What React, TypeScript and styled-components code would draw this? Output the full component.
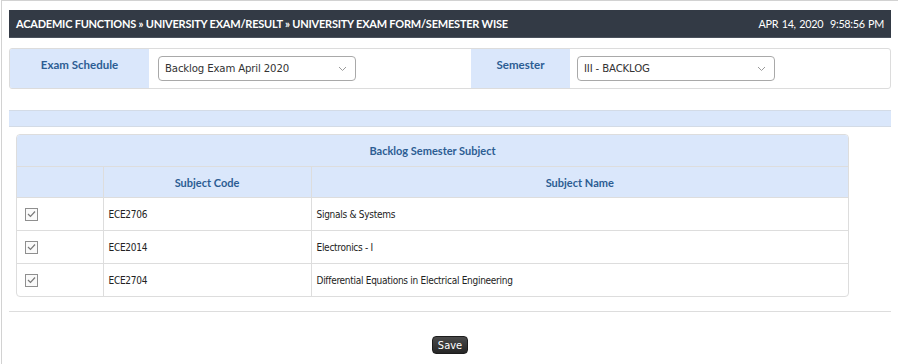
import styled, { createGlobalStyle } from "styled-components";

const GlobalStyle = createGlobalStyle`
  html, body {
    margin: 0;
    padding: 0;
    background: #ffffff;
    overflow: hidden;
  }
  body {
    font-family: "DejaVu Sans Condensed", "DejaVu Sans", sans-serif;
    font-stretch: condensed;
  }
`;

const Frame = styled.div`
  margin-left: 1px;
  border-top: 1px solid #d2d2d2;
  border-left: 1px solid #d2d2d2;
  padding: 9px 7px 10px 7px;
  width: 882px;
  height: 353px;
  box-sizing: content-box;
`;

const TitleBar = styled.div`
  display: flex;
  justify-content: space-between;
  align-items: center;
  height: 28px;
  padding: 0 7px 0 7px;
  background: #333a45;
  border-bottom: 1px solid #4a515c;
  box-sizing: border-box;
  color: #ffffff;
`;

const Crumbs = styled.div`
  font-family: "Lato", "Liberation Sans", sans-serif;
  font-stretch: normal;
  font-weight: 700;
  font-size: 11px;
  letter-spacing: -0.22px;
`;

const Clock = styled.div`
  font-family: "Lato", "Liberation Sans", sans-serif;
  font-stretch: normal;
  font-size: 10.8px;
  letter-spacing: -0.3px;
  word-spacing: 1px;
  white-space: pre;
`;

const FilterBox = styled.div`
  display: grid;
  grid-template-columns: 139px 322px 99px 1fr;
  margin-top: 10px;
  height: 41px;
  border: 1px solid #dcdcdc;
  border-radius: 3px;
  overflow: hidden;
  box-sizing: border-box;
`;

const FilterLabel = styled.div`
  background: #dae7fb;
  color: #2c5d93;
  font-family: "Lato", "Liberation Sans", sans-serif;
  font-stretch: normal;
  font-weight: 700;
  font-size: 11.5px;
  text-align: center;
  padding-top: 9px;
`;

const FilterField = styled.div<{ $pad: number }>`
  display: flex;
  align-items: center;
  padding-left: ${(p) => p.$pad}px;
`;

const SelectBox = styled.div<{ $width: number }>`
  display: flex;
  align-items: center;
  justify-content: space-between;
  width: ${(p) => p.$width}px;
  height: 25px;
  border: 1px solid #a9a9a9;
  border-radius: 4px;
  padding: 0 8px 0 6px;
  box-sizing: border-box;
  color: #333333;
  font-size: 11.3px;
  letter-spacing: -0.15px;
`;

const Chevron = () => (
  <svg width="9" height="6" viewBox="0 0 9 6">
    <path d="M1 1 L4.5 4.5 L8 1" fill="none" stroke="#9a9a9a" strokeWidth="1" />
  </svg>
);

const Strip = styled.div`
  margin-top: 21px;
  height: 17px;
  background: #dae7fb;
  border-top: 1px solid #d3dbe6;
  border-bottom: 1px solid #d3dbe6;
  box-sizing: border-box;
`;

const TableWrap = styled.div`
  margin: 7px 0 0 7px;
  width: 831px;
  border: 1px solid #dddddd;
  border-radius: 4px;
  overflow: hidden;
`;

const Table = styled.table`
  width: 100%;
  border-collapse: collapse;
  table-layout: fixed;
`;

const CaptionCell = styled.th`
  height: 31px;
  background: #dae7fb;
  color: #2c5d93;
  font-family: "Lato", "Liberation Sans", sans-serif;
  font-stretch: normal;
  font-weight: 700;
  font-size: 11px;
  text-align: center;
  border-bottom: 1px solid #dddddd;
  padding: 0;
`;

const HeadCell = styled.th`
  height: 30px;
  background: #dae7fb;
  color: #2c5d93;
  font-family: "Lato", "Liberation Sans", sans-serif;
  font-stretch: normal;
  font-weight: 700;
  font-size: 11px;
  text-align: center;
  border-bottom: 1px solid #dddddd;
  border-left: 1px solid #dddddd;
  padding: 0;
  &:first-child {
    border-left: none;
  }
`;

const Cell = styled.td`
  height: 32px;
  padding: 0 0 0 5px;
  color: #222222;
  font-size: 10px;
  letter-spacing: -0.28px;
  border-top: 1px solid #dddddd;
  border-left: 1px solid #dddddd;
  &:first-child {
    border-left: none;
    padding-left: 8px;
  }
`;

const Check = styled.span`
  display: inline-flex;
  align-items: center;
  justify-content: center;
  width: 11px;
  height: 11px;
  border: 1px solid #8f8f8f;
  background: #fafafa;
  vertical-align: middle;
`;

const Rule = styled.div`
  margin-top: 14px;
  border-top: 1px solid #dddddd;
`;

const Actions = styled.div`
  display: flex;
  justify-content: center;
  padding-top: 24px;
`;

const SaveButton = styled.button`
  height: 18px;
  padding: 0 5px;
  border: 1px solid #1c1c1c;
  border-radius: 4px;
  background: linear-gradient(#4a4a4a, #262626);
  color: #ffffff;
  font-family: "DejaVu Sans Condensed", "DejaVu Sans", sans-serif;
  font-stretch: condensed;
  font-size: 11px;
  line-height: 15px;
  cursor: pointer;
`;

interface Subject {
  code: string;
  name: string;
}

const subjects: Subject[] = [
  { code: "ECE2706", name: "Signals & Systems" },
  { code: "ECE2014", name: "Electronics - I" },
  { code: "ECE2704", name: "Differential Equations in Electrical Engineering" },
];

const CheckMark = () => (
  <Check>
    <svg width="9" height="8" viewBox="0 0 9 8">
      <path d="M1 4 L3.5 6.5 L8 1.5" fill="none" stroke="#7a7a7a" strokeWidth="1.2" />
    </svg>
  </Check>
);

const App = () => {
  return (
    <>
      <GlobalStyle />
      <Frame>
        <TitleBar>
          <Crumbs>
            ACADEMIC FUNCTIONS » UNIVERSITY EXAM/RESULT » UNIVERSITY EXAM FORM/SEMESTER WISE
          </Crumbs>
          <Clock>{"APR 14, 2020  9:58:56 PM"}</Clock>
        </TitleBar>

        <FilterBox>
          <FilterLabel>Exam Schedule</FilterLabel>
          <FilterField $pad={9}>
            <SelectBox $width={198}>
              <span>Backlog Exam April 2020</span>
              <Chevron />
            </SelectBox>
          </FilterField>
          <FilterLabel>Semester</FilterLabel>
          <FilterField $pad={7}>
            <SelectBox $width={198}>
              <span>III - BACKLOG</span>
              <Chevron />
            </SelectBox>
          </FilterField>
        </FilterBox>

        <Strip />

        <TableWrap>
          <Table>
            <colgroup>
              <col style={{ width: 86 }} />
              <col style={{ width: 208 }} />
              <col />
            </colgroup>
            <thead>
              <tr>
                <CaptionCell colSpan={3}>Backlog Semester Subject</CaptionCell>
              </tr>
              <tr>
                <HeadCell />
                <HeadCell>Subject Code</HeadCell>
                <HeadCell>Subject Name</HeadCell>
              </tr>
            </thead>
            <tbody>
              {subjects.map((s) => (
                <tr key={s.code}>
                  <Cell>
                    <CheckMark />
                  </Cell>
                  <Cell>{s.code}</Cell>
                  <Cell>{s.name}</Cell>
                </tr>
              ))}
            </tbody>
          </Table>
        </TableWrap>

        <Rule />

        <Actions>
          <SaveButton>Save</SaveButton>
        </Actions>
      </Frame>
    </>
  );
};

export default App;
